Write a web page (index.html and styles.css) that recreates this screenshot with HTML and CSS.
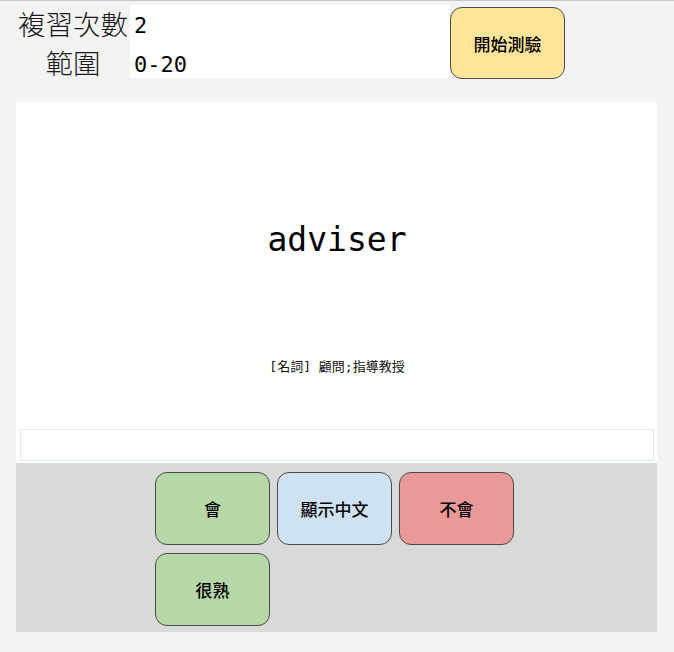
FILE: index.html
```html
<!DOCTYPE html>
<html lang="zh-Hant">
<head>
<meta charset="utf-8">
<title>單字複習</title>
<link rel="stylesheet" href="styles.css">
</head>
<body>
<div class="top">
  <div class="label l1">複習次數</div>
  <div class="field f1">2</div>
  <div class="label l2">範圍</div>
  <div class="field f2">0-20</div>
  <button class="btn start">開始測驗</button>
</div>
<div class="card">
  <div class="word-area">
    <div class="word">adviser</div>
    <div class="meaning">[名詞] 顧問;指導教授</div>
  </div>
  <div class="answer"></div>
</div>
<div class="controls">
  <div class="btn-group">
    <button class="btn know">會</button>
    <button class="btn show">顯示中文</button>
    <button class="btn dont">不會</button>
    <button class="btn know">很熟</button>
  </div>
</div>
</body>
</html>
```
FILE: styles.css
```css
html, body {
  margin: 0;
  padding: 0;
}
body {
  background: #f3f3f3;
  border-top: 1px solid #c6c6c6;
  font-family: "Noto Sans CJK TC", "Noto Sans", sans-serif;
  color: #000;
  height: 651px;
}
.top {
  display: grid;
  grid-template-columns: 114px 320px 115px;
  grid-template-rows: 37px 36px;
  padding: 4px 0 0 16px;
}
.label {
  font-size: 27.5px;
  line-height: 37px;
  text-align: center;
  color: #1a1a1a;
  font-weight: 300;
  white-space: nowrap;
}
.l1 { grid-row: 1; grid-column: 1; }
.l2 { grid-row: 2; grid-column: 1; line-height: 40px; }
.field {
  background: #fff;
  font-family: "DejaVu Sans Mono", monospace;
  font-size: 22px;
  padding-left: 4px;
  box-sizing: border-box;
}
.f1 { grid-row: 1; grid-column: 2; line-height: 42px; }
.f2 {
  grid-row: 2;
  grid-column: 2;
  height: 36px;
  padding-top: 10px;
  line-height: 26px;
}
.btn {
  font-family: "Noto Sans CJK TC", "Noto Sans", sans-serif;
  font-size: 17px;
  font-weight: 500;
  color: #000;
  border: 1px solid #4a4a4a;
  border-radius: 12px;
  width: 115px;
  height: 73px;
  padding: 0;
  cursor: pointer;
}
.start {
  grid-row: 1 / 3;
  grid-column: 3;
  margin-top: 2px;
  height: 72px;
  background: #ffe599;
}
.card {
  margin: 24px 17px 0 16px;
  background: #fff;
  padding: 0 3px 2px 4px;
}
.word-area {
  height: 327px;
  display: flex;
  flex-direction: column;
  align-items: center;
}
.word {
  font-family: "DejaVu Sans Mono", monospace;
  font-size: 33px;
  line-height: 40px;
  margin-top: 118px;
}
.meaning {
  font-family: "DejaVu Sans Mono", "Noto Sans CJK TC", monospace;
  font-size: 13px;
  line-height: 20px;
  margin-top: 97px;
  color: #111;
}
.answer {
  height: 30px;
  border: 1px solid #dcebe3;
  border-bottom-color: #d5ecdc;
}
.controls {
  margin: 0 17px 0 16px;
  background: #d9d9d9;
  padding: 9px 0 6px;
}
.btn-group {
  width: 359px;
  margin-left: 139px;
  display: flex;
  flex-wrap: wrap;
  gap: 8px 7px;
}
.know { background: #b6d7a8; }
.show { background: #cfe2f3; }
.dont { background: #ea9999; }
```
